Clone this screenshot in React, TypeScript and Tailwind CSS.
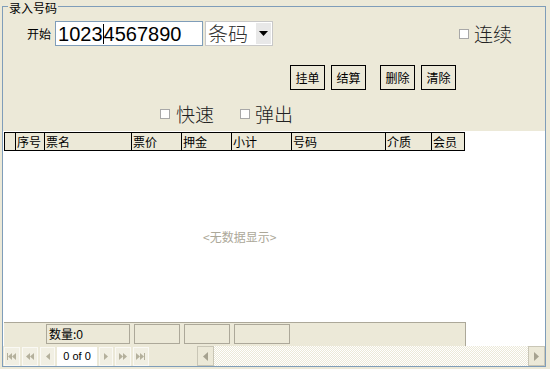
import React from "react";

const cjk = "font-['SimSun','Noto_Sans_CJK_SC',sans-serif]";

function Check() {
  return <div className="w-[10px] h-[10px] border border-[#a8a8a8] bg-white shrink-0" />;
}

function Btn({ label }: { label: string }) {
  return (
    <div className="w-[35px] h-[25px] border border-black flex items-center justify-center text-[12px] leading-[12px] text-black">
      {label}
    </div>
  );
}

const cols: [string, number][] = [
  ["", 11],
  ["序号", 29],
  ["票名", 87],
  ["票价", 50],
  ["押金", 50],
  ["小计", 60],
  ["号码", 94],
  ["介质", 46],
  ["会员", 34],
];

function NavIcon({ kind }: { kind: string }) {
  const c = "#b4b09c";
  return (
    <svg width="10" height="9" viewBox="0 0 10 9">
      {kind === "first" && (
        <g fill={c}>
          <rect x="0" y="1" width="1" height="7" />
          <polygon points="1,4.5 5,1 5,8" />
          <polygon points="5,4.5 9,1 9,8" />
        </g>
      )}
      {kind === "prevp" && (
        <g fill={c}>
          <polygon points="1,4.5 5,1 5,8" />
          <polygon points="5,4.5 9,1 9,8" />
        </g>
      )}
      {kind === "prev" && (
        <g fill={c}>
          <polygon points="3,4.5 7,1 7,8" />
        </g>
      )}
      {kind === "next" && (
        <g fill={c}>
          <polygon points="7,4.5 3,1 3,8" />
        </g>
      )}
      {kind === "nextp" && (
        <g fill={c}>
          <polygon points="5,4.5 1,1 1,8" />
          <polygon points="9,4.5 5,1 5,8" />
        </g>
      )}
      {kind === "last" && (
        <g fill={c}>
          <polygon points="4,4.5 0,1 0,8" />
          <polygon points="8,4.5 4,1 4,8" />
          <rect x="8" y="1" width="1" height="7" />
        </g>
      )}
    </svg>
  );
}

function NavBox({ kind, w }: { kind: string; w: string }) {
  return (
    <div className={`${w} h-[19px] bg-[#F1EFE3] border border-[#FAF9F4] flex items-center justify-center`}>
      <NavIcon kind={kind} />
    </div>
  );
}

export default function App() {
  return (
    <div className={`w-[550px] h-[369px] bg-[#ECE9D8] ${cjk}`}>
      <div className="pt-[6px] pl-[2px]">
        <div className="relative w-[544px] h-[361px] border border-[#7F9DB9] flex flex-col">
          <div className="absolute left-[5px] -top-[6px] bg-[#ECE9D8] px-[1px] text-[12px] leading-[13px] text-black whitespace-nowrap">
            录入号码
          </div>

          {/* top panel */}
          <div className="h-[124px] flex flex-col">
            <div className="mt-[14px] h-[25px] flex items-center">
              <span className="ml-[24px] text-[12px] leading-[12px] text-black">开始</span>
              <div className="ml-[4px] w-[148px] h-[25px] border border-[#7F9DB9] bg-white flex items-center pl-[2px] font-['Liberation_Sans',sans-serif] text-[20px] leading-[22px] text-black">
                <span>1023</span>
                <span className="w-[1px] h-[20px] bg-black" />
                <span>4567890</span>
              </div>
              <div className="ml-[2px] w-[68px] h-[25px] border border-[#c8c8c8] bg-white flex items-center">
                <span className="ml-[2px] text-[20px] leading-[22px] font-light text-[#333]">条码</span>
                <div className="ml-auto mr-[1px] w-[15px] h-[21px] bg-[#E8E8E8] flex items-center justify-center">
                  <svg width="9" height="5" viewBox="0 0 9 5">
                    <polygon points="0,0 9,0 4.5,5" fill="#000" />
                  </svg>
                </div>
              </div>
              <div className="ml-[186px]">
                <Check />
              </div>
              <span className="ml-[5px] text-[19px] leading-[22px] font-light text-[#222]">连续</span>
            </div>

            <div className="mt-[19px] h-[25px] flex items-center">
              <div className="ml-[287px]">
                <Btn label="挂单" />
              </div>
              <div className="ml-[6px]">
                <Btn label="结算" />
              </div>
              <div className="ml-[14px]">
                <Btn label="删除" />
              </div>
              <div className="ml-[6px]">
                <Btn label="清除" />
              </div>
            </div>

            <div className="mt-[12px] h-[24px] flex items-center">
              <div className="ml-[157px]">
                <Check />
              </div>
              <span className="ml-[6px] text-[19px] leading-[22px] font-light text-[#222]">快速</span>
              <div className="ml-[26px]">
                <Check />
              </div>
              <span className="ml-[5px] text-[19px] leading-[22px] font-light text-[#222]">弹出</span>
            </div>
          </div>

          {/* grid */}
          <div className="flex-1 bg-white flex flex-col">
            <div className="pt-[1px] pl-[1px] flex">
              {cols.map(([t, w], i) => (
                <div
                  key={i}
                  style={{ width: w }}
                  className={`h-[19px] bg-[#ECE9D8] border-t border-b border-l border-black ${
                    i === cols.length - 1 ? "border-r" : ""
                  } text-[12px] leading-[17px] text-black pl-[1px] whitespace-nowrap`}
                >
                  {t}
                </div>
              ))}
            </div>
            <div className="flex-1 flex items-center">
              <span className="ml-[200px] text-[12px] leading-[14px] text-[#ACA899]">&lt;无数据显示&gt;</span>
            </div>
            <div className="ml-[1px] w-[462px] h-[24px] bg-[#ECE9D8] border-t border-r border-[#ACA899] flex pt-[1px]">
              <div className="ml-[42px] w-[84px] h-[20px] border border-[#ACA899] text-[12px] leading-[18px] pl-[2px] text-black">
                数量:<span className="font-['Liberation_Sans',sans-serif] text-[12px]">0</span>
              </div>
              <div className="ml-[4px] w-[46px] h-[20px] border border-[#ACA899]" />
              <div className="ml-[4px] w-[46px] h-[20px] border border-[#ACA899]" />
              <div className="ml-[4px] w-[56px] h-[20px] border border-[#ACA899]" />
            </div>
            <div className="h-[20px] bg-[#ECE9D8] flex items-center">
              <div className="ml-[1px] flex items-center gap-[2px]">
                <NavBox kind="first" w="w-[16px]" />
                <NavBox kind="prevp" w="w-[16px]" />
                <NavBox kind="prev" w="w-[15px]" />
                <div className="w-[40px] h-[19px] bg-white flex items-center justify-center font-['Liberation_Sans',sans-serif] text-[11px] text-black">
                  0 of 0
                </div>
                <NavBox kind="next" w="w-[14px]" />
                <NavBox kind="nextp" w="w-[16px]" />
                <NavBox kind="last" w="w-[16px]" />
              </div>
              <div className="ml-[48px] flex-1 h-[20px] flex">
                <div className="w-[17px] h-[20px] border border-[#C9C6B6] bg-[#ECE9D8] flex items-center justify-center">
                  <svg width="5" height="9" viewBox="0 0 5 9">
                    <polygon points="5,0 5,9 0,4.5" fill="#A6A290" />
                  </svg>
                </div>
                <div className="flex-1 h-[20px] bg-[repeating-conic-gradient(#ECE9D8_0%_25%,#ffffff_0%_50%)] bg-[length:2px_2px]" />
                <div className="w-[17px] h-[20px] border border-[#C9C6B6] bg-[#ECE9D8] flex items-center justify-center">
                  <svg width="5" height="9" viewBox="0 0 5 9">
                    <polygon points="0,0 0,9 5,4.5" fill="#A6A290" />
                  </svg>
                </div>
              </div>
            </div>
          </div>
        </div>
      </div>
    </div>
  );
}
